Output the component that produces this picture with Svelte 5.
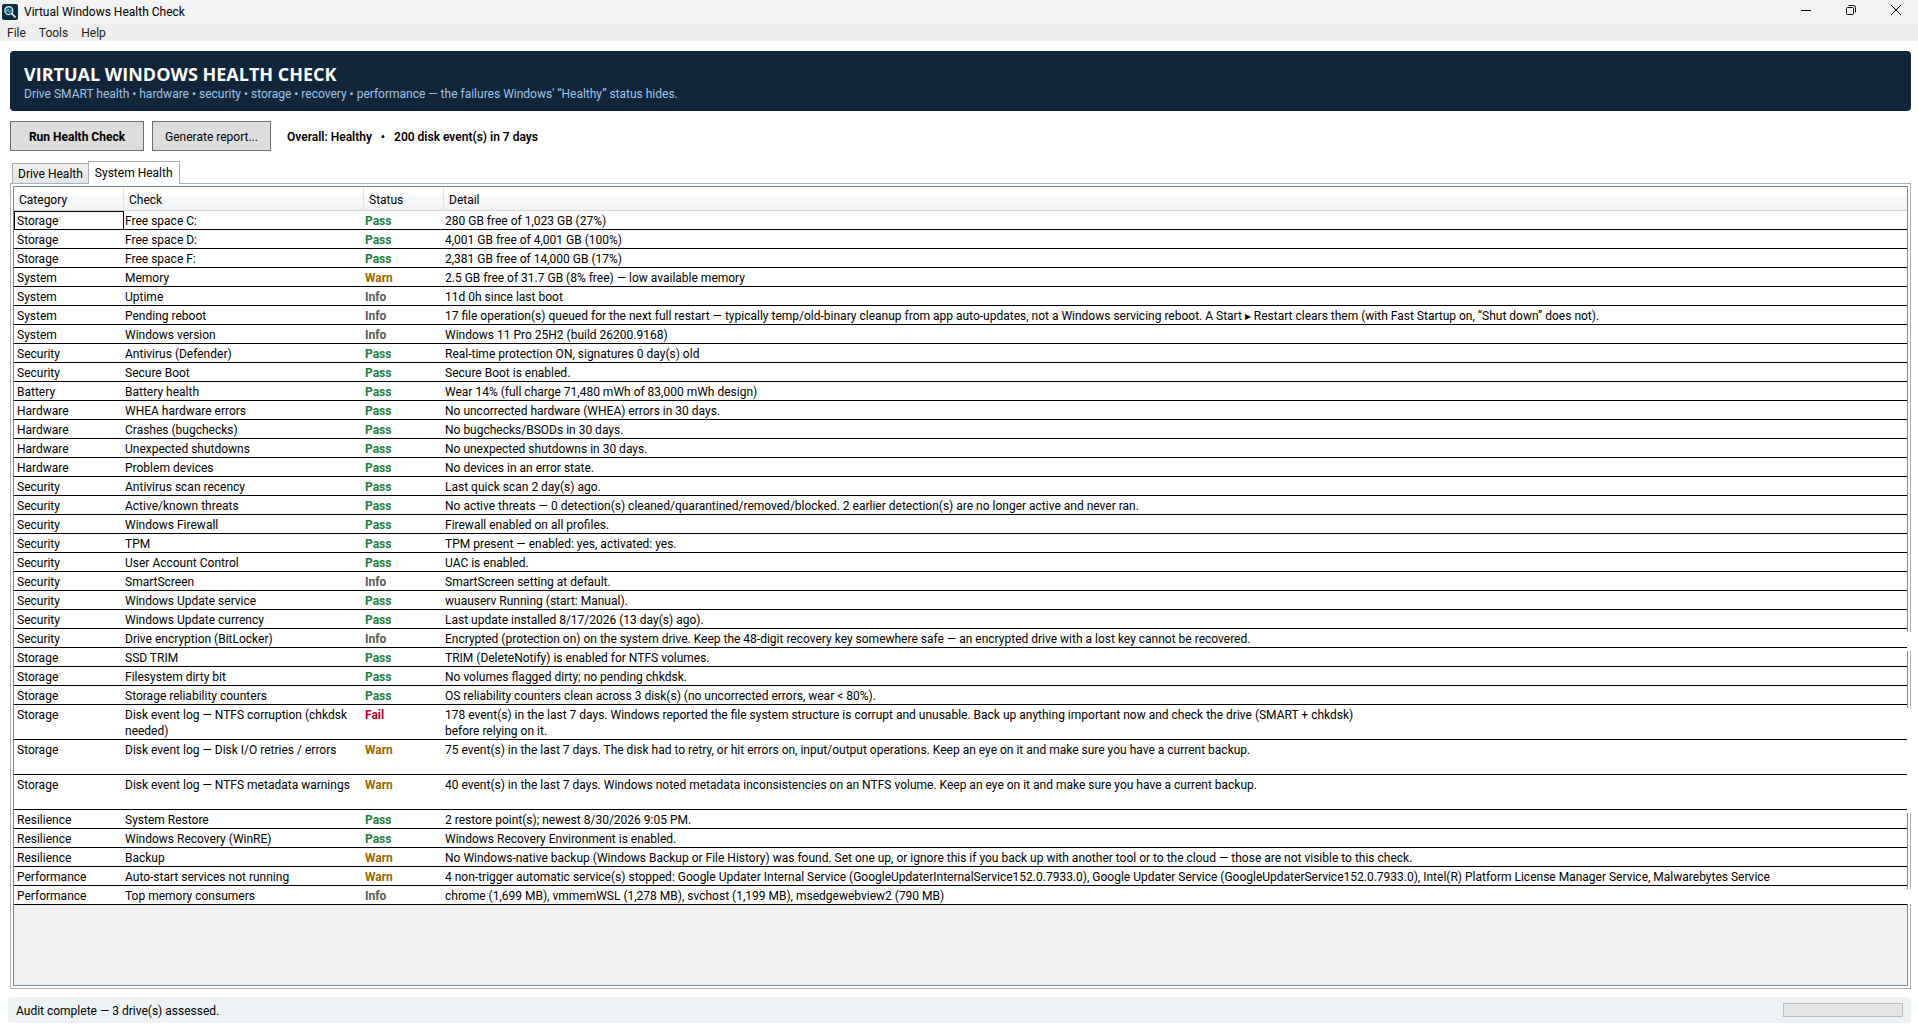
<script>
  const rows = [
    ['Storage', 'Free space C:', 'Pass', '280 GB free of 1,023 GB (27%)'],
    ['Storage', 'Free space D:', 'Pass', '4,001 GB free of 4,001 GB (100%)'],
    ['Storage', 'Free space F:', 'Pass', '2,381 GB free of 14,000 GB (17%)'],
    ['System', 'Memory', 'Warn', '2.5 GB free of 31.7 GB (8% free) — low available memory'],
    ['System', 'Uptime', 'Info', '11d 0h since last boot'],
    ['System', 'Pending reboot', 'Info', '17 file operation(s) queued for the next full restart — typically temp/old-binary cleanup from app auto-updates, not a Windows servicing reboot. A Start ▸ Restart clears them (with Fast Startup on, “Shut down” does not).'],
    ['System', 'Windows version', 'Info', 'Windows 11 Pro 25H2 (build 26200.9168)'],
    ['Security', 'Antivirus (Defender)', 'Pass', 'Real-time protection ON, signatures 0 day(s) old'],
    ['Security', 'Secure Boot', 'Pass', 'Secure Boot is enabled.'],
    ['Battery', 'Battery health', 'Pass', 'Wear 14% (full charge 71,480 mWh of 83,000 mWh design)'],
    ['Hardware', 'WHEA hardware errors', 'Pass', 'No uncorrected hardware (WHEA) errors in 30 days.'],
    ['Hardware', 'Crashes (bugchecks)', 'Pass', 'No bugchecks/BSODs in 30 days.'],
    ['Hardware', 'Unexpected shutdowns', 'Pass', 'No unexpected shutdowns in 30 days.'],
    ['Hardware', 'Problem devices', 'Pass', 'No devices in an error state.'],
    ['Security', 'Antivirus scan recency', 'Pass', 'Last quick scan 2 day(s) ago.'],
    ['Security', 'Active/known threats', 'Pass', 'No active threats — 0 detection(s) cleaned/quarantined/removed/blocked. 2 earlier detection(s) are no longer active and never ran.'],
    ['Security', 'Windows Firewall', 'Pass', 'Firewall enabled on all profiles.'],
    ['Security', 'TPM', 'Pass', 'TPM present — enabled: yes, activated: yes.'],
    ['Security', 'User Account Control', 'Pass', 'UAC is enabled.'],
    ['Security', 'SmartScreen', 'Info', 'SmartScreen setting at default.'],
    ['Security', 'Windows Update service', 'Pass', 'wuauserv Running (start: Manual).'],
    ['Security', 'Windows Update currency', 'Pass', 'Last update installed 8/17/2026 (13 day(s) ago).'],
    ['Security', 'Drive encryption (BitLocker)', 'Info', 'Encrypted (protection on) on the system drive. Keep the 48-digit recovery key somewhere safe — an encrypted drive with a lost key cannot be recovered.', 'wide'],
    ['Storage', 'SSD TRIM', 'Pass', 'TRIM (DeleteNotify) is enabled for NTFS volumes.'],
    ['Storage', 'Filesystem dirty bit', 'Pass', 'No volumes flagged dirty; no pending chkdsk.'],
    ['Storage', 'Storage reliability counters', 'Pass', 'OS reliability counters clean across 3 disk(s) (no uncorrected errors, wear < 80%).'],
    ['Storage', 'Disk event log — NTFS corruption (chkdsk needed)', 'Fail', '178 event(s) in the last 7 days. Windows reported the file system structure is corrupt and unusable. Back up anything important now and check the drive (SMART + chkdsk) before relying on it.', 'wide tall'],
    ['Storage', 'Disk event log — Disk I/O retries / errors', 'Warn', '75 event(s) in the last 7 days. The disk had to retry, or hit errors on, input/output operations. Keep an eye on it and make sure you have a current backup.', 'wide tall'],
    ['Storage', 'Disk event log — NTFS metadata warnings', 'Warn', '40 event(s) in the last 7 days. Windows noted metadata inconsistencies on an NTFS volume. Keep an eye on it and make sure you have a current backup.', 'wide tall'],
    ['Resilience', 'System Restore', 'Pass', '2 restore point(s); newest 8/30/2026 9:05 PM.'],
    ['Resilience', 'Windows Recovery (WinRE)', 'Pass', 'Windows Recovery Environment is enabled.'],
    ['Resilience', 'Backup', 'Warn', 'No Windows-native backup (Windows Backup or File History) was found. Set one up, or ignore this if you back up with another tool or to the cloud — those are not visible to this check.'],
    ['Performance', 'Auto-start services not running', 'Warn', '4 non-trigger automatic service(s) stopped: Google Updater Internal Service (GoogleUpdaterInternalService152.0.7933.0), Google Updater Service (GoogleUpdaterService152.0.7933.0), Intel(R) Platform License Manager Service, Malwarebytes Service'],
    ['Performance', 'Top memory consumers', 'Info', 'chrome (1,699 MB), vmmemWSL (1,278 MB), svchost (1,199 MB), msedgewebview2 (790 MB)', 'wide last'],
  ];
</script>

<div class="window">
  <header class="titlebar">
    <svg class="logo" width="16" height="16" viewBox="0 0 16 16" fill="none">
      <rect width="16" height="16" rx="2" fill="#0c2c40" />
      <circle cx="6.8" cy="6.6" r="4" fill="#155a75" stroke="#dcebf2" stroke-width="1.2" />
      <path d="M3.5 6.8h1.6l1-1.8 1.3 3.4 1-1.6h1.6" stroke="#58c8e8" stroke-width="0.9" />
      <path d="M9.9 9.7l3.2 3.3" stroke="#eef6fa" stroke-width="1.7" stroke-linecap="round" />
    </svg>
    <span class="caption">Virtual Windows Health Check</span>
    <div class="controls">
      <button aria-label="Minimize">
        <svg width="12" height="12" viewBox="0 0 12 12"><path d="M1 6.5h10" stroke="#000" /></svg>
      </button>
      <button aria-label="Restore">
        <svg width="12" height="12" viewBox="0 0 12 12" fill="none" stroke="#000">
          <rect x="1.5" y="3.5" width="7" height="7" rx="1" />
          <path d="M3.5 1.5h5a2 2 0 0 1 2 2v5" />
        </svg>
      </button>
      <button aria-label="Close">
        <svg width="12" height="12" viewBox="0 0 12 12"><path d="M1 1l10 10M11 1L1 11" stroke="#000" /></svg>
      </button>
    </div>
  </header>
  <nav class="menu">
    <button>File</button><button>Tools</button><button>Help</button>
  </nav>

  <main>
    <section class="banner">
      <h1>VIRTUAL WINDOWS HEALTH CHECK</h1>
      <p>Drive SMART health • hardware • security • storage • recovery • performance — the failures Windows' “Healthy” status hides.</p>
    </section>

    <div class="actions">
      <button class="run">Run Health Check</button>
      <button class="report">Generate report...</button>
      <span class="overall">Overall: Healthy &nbsp; • &nbsp; 200 disk event(s) in 7 days</span>
    </div>

    <div class="tabs" role="tablist">
      <button role="tab" aria-selected="false">Drive Health</button>
      <button role="tab" aria-selected="true" class="active">System Health</button>
    </div>
    <div class="panel">
      <div class="grid">
        <table>
          <colgroup><col class="c1" /><col class="c2" /><col class="c3" /><col /></colgroup>
          <thead>
            <tr><th>Category</th><th>Check</th><th>Status</th><th>Detail</th></tr>
          </thead>
          <tbody>
            {#each rows as [category, check, status, detail, kind], i}
              <tr class={kind}>
                <td class:focused={i === 0}>{category}</td>
                <td>{check}</td>
                <td class="status {status.toLowerCase()}">{status}</td>
                <td><div class="detail">{detail}</div></td>
              </tr>
            {/each}
          </tbody>
        </table>
      </div>
    </div>

    <footer>
      <span>Audit complete — 3 drive(s) assessed.</span>
      <div class="progress" role="progressbar" aria-label="Progress" aria-valuenow="0"></div>
    </footer>
  </main>
</div>

<style>
  :global(body) {
    margin: 0;
    background: #fff;
  }
  .window {
    display: flex;
    flex-direction: column;
    min-height: 100vh;
    color: #000;
    font: 12px/16px Roboto, 'Open Sans', sans-serif;
  }
  button {
    margin: 0;
    padding: 0;
    border: 0;
    background: none;
    color: inherit;
    font: inherit;
  }
  .titlebar {
    display: flex;
    align-items: center;
    height: 23px;
    padding-left: 2px;
    background: #f3f3f3;
  }
  .logo {
    margin-right: 6px;
  }
  .caption {
    flex: 1;
  }
  .controls {
    display: flex;
    align-self: flex-start;
  }
  .controls button {
    display: grid;
    place-items: center;
    width: 45px;
    height: 20px;
  }
  .menu {
    display: flex;
    gap: 13px;
    height: 16px;
    padding: 2px 7px 0;
    background: #efefef;
    color: #212121;
  }
  main {
    display: flex;
    flex: 1;
    flex-direction: column;
    padding: 10px 7px 9px 10px;
  }
  .banner {
    height: 60px;
    box-sizing: border-box;
    padding: 11px 14px;
    border-radius: 4px;
    background: #11263b;
  }
  h1 {
    margin: 0;
    color: #fff;
    font-family: 'Open Sans', sans-serif;
    font-size: 18px;
    line-height: 24px;
  }
  .banner p {
    margin: 0;
    color: #9fc3e6;
  }
  .actions {
    display: flex;
    align-items: center;
    gap: 8px;
    padding: 10px 0;
  }
  .run,
  .report {
    height: 30px;
    padding-top: 2px;
    border: 1px solid #707070;
    background: #ddd;
  }
  .run {
    width: 134px;
    font-weight: 700;
  }
  .report {
    width: 119px;
  }
  .overall {
    margin-left: 8px;
    padding-top: 2px;
    font-weight: 600;
  }
  .tabs {
    display: flex;
    align-items: flex-end;
    padding-left: 2px;
  }
  .tabs button {
    height: 20px;
    padding: 0 5px;
    border: 1px solid #acacac;
    border-width: 1px 0 0 1px;
    background: linear-gradient(#f0f0f0, #e5e5e5);
  }
  .tabs .active {
    z-index: 1;
    height: 23px;
    margin-bottom: -1px;
    padding: 0 6px;
    border-width: 1px 1px 0;
    background: #fff;
  }
  .panel {
    display: flex;
    flex: 1;
    padding: 2px;
    border: 1px solid #acb1b8;
  }
  .grid {
    flex: 1;
    border: 1px solid #688caf;
    background: #f0f0f0;
  }
  table {
    width: 100%;
    border-spacing: 0;
    table-layout: fixed;
  }
  .c1 { width: 110px; }
  .c2 { width: 240px; }
  .c3 { width: 80px; }
  th {
    height: 21px;
    padding: 2px 5px 0;
    border-right: 1px solid #dfe1e4;
    border-bottom: 1px solid #d5d5d5;
    background: linear-gradient(#fff 40%, #f7f8fa 41%, #f1f2f4);
    font-weight: 400;
    text-align: left;
  }
  th:last-child {
    border-right: 0;
  }
  td {
    height: 16px;
    padding: 2px 2px 0 1px;
    border-bottom: 1px solid #000;
    background: #fff;
    vertical-align: top;
  }
  td:first-child {
    padding-left: 3px;
  }
  .focused {
    outline: 1px solid #000;
    outline-offset: -1px;
  }
  .status { font-weight: 700; }
  .pass { color: #1e7e3e; }
  .warn { color: #9a6700; }
  .info { color: #555b63; }
  .fail { color: #b00030; }
  .detail {
    white-space: nowrap;
  }
  .tall td {
    height: 32px;
  }
  .tall .detail {
    max-width: 926px;
    white-space: normal;
  }
  .wide td:last-child {
    position: relative;
  }
  .wide td:last-child::after {
    content: '';
    position: absolute;
    top: 3px;
    right: -5px;
    bottom: -4px;
    width: 5px;
    background: #fff;
  }
  .last td:last-child::after {
    bottom: 0;
  }
  footer {
    display: flex;
    align-items: center;
    justify-content: space-between;
    height: 26px;
    margin: 8px 0 0 -2px;
    padding: 0 8px;
    border-radius: 4px;
    background: #edf2f5;
  }
  footer span {
    padding-top: 2px;
  }
  .progress {
    width: 118px;
    height: 12px;
    border: 1px solid #bcbcbc;
    background: #e6e6e6;
  }
</style>
